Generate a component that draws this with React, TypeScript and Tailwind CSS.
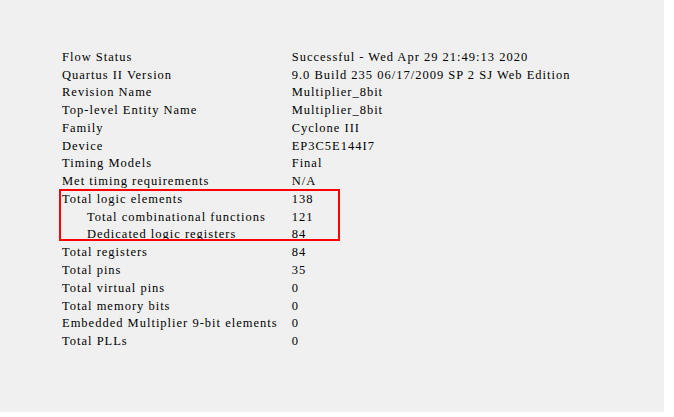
const rows: { label: string; value: string; indent?: boolean }[] = [
  { label: "Flow Status", value: "Successful - Wed Apr 29 21:49:13 2020" },
  { label: "Quartus II Version", value: "9.0 Build 235 06/17/2009 SP 2 SJ Web Edition" },
  { label: "Revision Name", value: "Multiplier_8bit" },
  { label: "Top-level Entity Name", value: "Multiplier_8bit" },
  { label: "Family", value: "Cyclone III" },
  { label: "Device", value: "EP3C5E144I7" },
  { label: "Timing Models", value: "Final" },
  { label: "Met timing requirements", value: "N/A" },
];

const logicRows = [
  { label: "Total logic elements", value: "138" },
  { label: "Total combinational functions", value: "121", indent: true },
  { label: "Dedicated logic registers", value: "84", indent: true },
];

const restRows = [
  { label: "Total registers", value: "84" },
  { label: "Total pins", value: "35" },
  { label: "Total virtual pins", value: "0" },
  { label: "Total memory bits", value: "0" },
  { label: "Embedded Multiplier 9-bit elements", value: "0" },
  { label: "Total PLLs", value: "0" },
];

function Row({ label, value, indent }: { label: string; value: string; indent?: boolean }) {
  return (
    <div className="grid h-[17.77px] grid-cols-[229.7px_1fr] items-center whitespace-pre">
      <span className={indent ? "pl-[25px]" : ""}>{label}</span>
      <span>{value}</span>
    </div>
  );
}

export default function App() {
  return (
    <div className="h-[417px] w-[674px] bg-white">
      <div
        className="h-[412px] w-[664px] bg-[#f0f0f0] pl-[62px] pt-[47.8px] text-[12.5px] tracking-[1px] text-black"
        style={{ fontFamily: '"Liberation Serif", serif' }}
      >
        {rows.map((r) => (
          <Row key={r.label} {...r} />
        ))}
        {/* highlighted block */}
        <div className="relative">
          {logicRows.map((r) => (
            <Row key={r.label} {...r} />
          ))}
          <div className="pointer-events-none absolute -left-[3px] top-[-0.5px] h-[52px] w-[281px] border-2 border-[#ff0000]" />
        </div>
        {restRows.map((r) => (
          <Row key={r.label} {...r} />
        ))}
      </div>
    </div>
  );
}
